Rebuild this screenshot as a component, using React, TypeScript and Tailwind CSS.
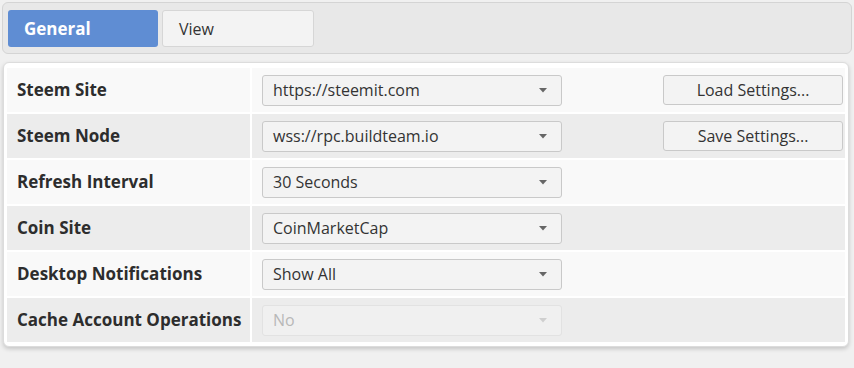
import React from "react";

const rows = [
  { label: "Steem Site", value: "https://steemit.com", button: "Load Settings..." },
  { label: "Steem Node", value: "wss://rpc.buildteam.io", button: "Save Settings..." },
  { label: "Refresh Interval", value: "30 Seconds" },
  { label: "Coin Site", value: "CoinMarketCap" },
  { label: "Desktop Notifications", value: "Show All" },
  { label: "Cache Account Operations", value: "No", disabled: true },
];

function Caret({ disabled }: { disabled?: boolean }) {
  return (
    <svg width="8" height="5" viewBox="0 0 8 5" className="shrink-0">
      <path d="M0 0 L8 0 L4 4.5 Z" fill={disabled ? "#cfcfcf" : "#666"} />
    </svg>
  );
}

export default function App() {
  return (
    <div
      className="w-[854px] h-[368px] bg-[#f0f0f0] text-[16px] text-[#333] overflow-hidden"
      style={{ fontFamily: '"Open Sans", "Noto Sans", sans-serif' }}
    >
      <div className="pt-[2px] px-[2px]">
        <div className="h-[52px] bg-[#e8e8e8] border border-[#d4d4d4] rounded-[6px] flex items-start gap-[4px] pl-[5px] pt-[7px]">
          <div className="w-[150px] h-[37px] bg-[#5f8dd3] rounded-[3px] flex items-center pl-[16px] text-white font-bold text-[17px]">
            General
          </div>
          <div className="w-[152px] h-[37px] bg-[#f3f3f3] border border-[#d6d6d6] rounded-[3px] flex items-center pl-[16px]">
            View
          </div>
        </div>
      </div>
      <div className="ml-[3px] mt-[8px] w-[846px] bg-white border border-[#dcdcdc] rounded-[6px] shadow-[0_2px_4px_rgba(0,0,0,0.18)] px-[3px] pt-[5px] pb-[4px] flex flex-col gap-[2px]">
        {rows.map((r, i) => {
          const bg = i % 2 === 0 ? "bg-[#f9f9f9]" : "bg-[#ececec]";
          return (
            <div key={r.label} className="flex gap-[2px] h-[44px]">
              <div className={`w-[243px] ${bg} flex items-center pl-[10px] font-bold text-[17px] text-[#2d2d2d]`}>
                {r.label}
              </div>
              <div className={`flex-1 ${bg} flex items-center pl-[10px]`}>
                <div
                  className={`w-[300px] h-[31px] rounded-[3px] border flex items-center justify-between pl-[10px] pr-[14px] ${
                    r.disabled
                      ? "bg-[#f0f0f0] border-[#e2e2e2] text-[#b8b8b8]"
                      : "bg-[#f3f3f3] border-[#c9c9c9] text-[#333]"
                  }`}
                >
                  <span>{r.value}</span>
                  <Caret disabled={r.disabled} />
                </div>
                {r.button && (
                  <div className="ml-[101px] w-[180px] h-[30px] rounded-[3px] border border-[#c9c9c9] bg-[#f3f3f3] flex items-center justify-center text-[#333]">
                    {r.button}
                  </div>
                )}
              </div>
            </div>
          );
        })}
      </div>
    </div>
  );
}
